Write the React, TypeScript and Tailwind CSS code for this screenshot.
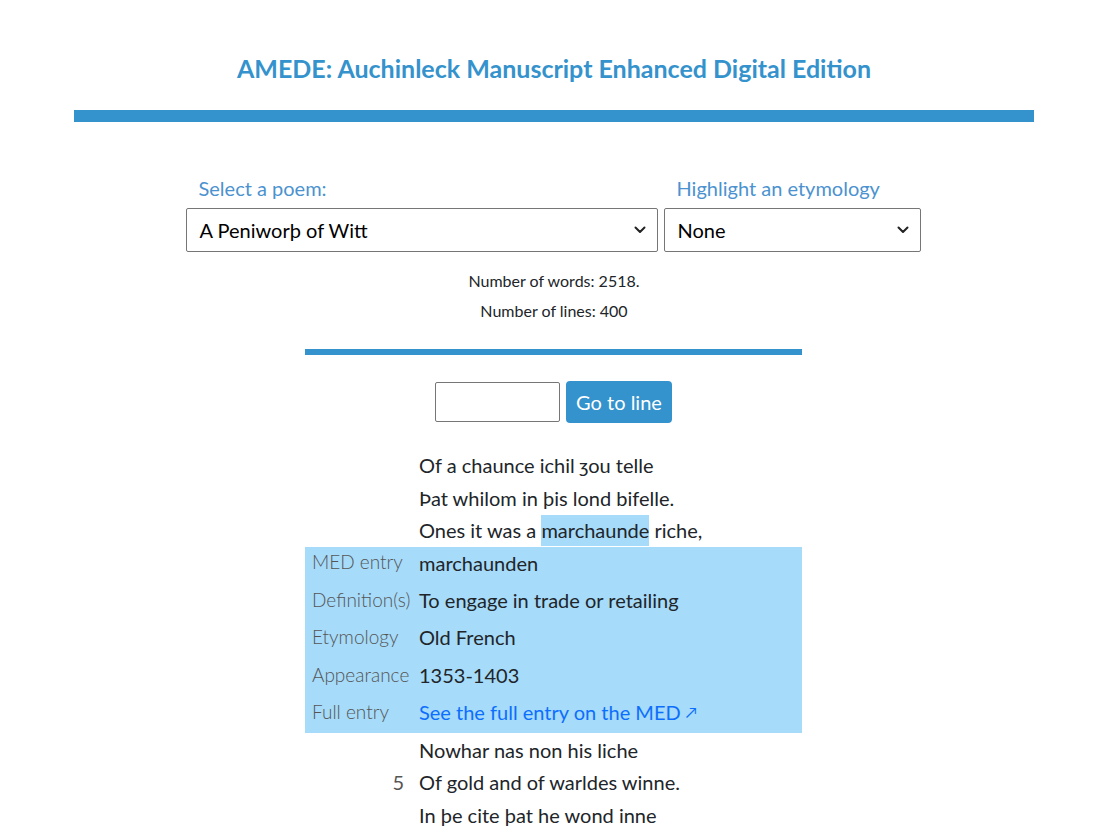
import React from "react";

const font = { fontFamily: "Lato, 'Noto Sans', sans-serif" };

function Chevron() {
  return (
    <svg width="12" height="8" viewBox="0 0 12 8" className="pointer-events-none absolute right-[12px] top-1/2 -translate-y-1/2">
      <path d="M1.5 1.5 L6 6 L10.5 1.5" fill="none" stroke="#222" strokeWidth="2" strokeLinecap="round" strokeLinejoin="round" />
    </svg>
  );
}

const poemBefore = [
  { n: "", t: "Of a chaunce ichil ȝou telle" },
  { n: "", t: "Þat whilom in þis lond bifelle." },
];
const poemAfter = [
  { n: "", t: "Nowhar nas non his liche" },
  { n: "5", t: "Of gold and of warldes winne." },
  { n: "", t: "In þe cite þat he wond inne" },
];

function Line({ n, children }: { n: string; children: React.ReactNode }) {
  return (
    <div className="grid grid-cols-[114px_1fr] h-[32.5px] items-center">
      <div className="text-right pr-[15px] text-[20px] text-[#555]">{n}</div>
      <div className="text-[20px] text-[#212529] whitespace-nowrap">{children}</div>
    </div>
  );
}

const rows: [string, React.ReactNode][] = [
  ["MED entry", "marchaunden"],
  ["Definition(s)", "To engage in trade or retailing"],
  ["Etymology", "Old French"],
  ["Appearance", "1353-1403"],
  [
    "Full entry",
    <span className="text-[#0d6efd]">
      See the full entry on the MED <span className="text-[15px] relative top-[-2px]">↗</span>
    </span>,
  ],
];

export default function App() {
  return (
    <div className="w-full min-h-[836px] bg-white overflow-hidden pr-[7px]" style={font}>
      <div className="w-[960px] mx-auto pt-[52px]">
        <h1 className="text-center text-[25px] leading-[32px] font-bold text-[#3492cc]">
          AMEDE: Auchinleck Manuscript Enhanced Digital Edition
        </h1>
        <div className="mt-[26px] h-[12px] bg-[#3492cc]" />

        <div className="flex justify-center gap-[6px] mt-[54px] ml-[-2px]">
          <div className="flex flex-col w-[472px]">
            <label className="pl-[13px] text-[20px] leading-[24px] text-[#4b92cf]">Select a poem:</label>
            <div className="relative mt-[8px]">
              <div className="h-[44px] border border-[#767676] rounded-[2px] flex items-center pl-[13px] text-[20px] text-black">
                A Peniworþ of Witt
              </div>
              <Chevron />
            </div>
          </div>
          <div className="flex flex-col w-[257px]">
            <label className="pl-[13px] text-[20px] leading-[24px] text-[#4b92cf] whitespace-nowrap">Highlight an etymology</label>
            <div className="relative mt-[8px]">
              <div className="h-[44px] border border-[#767676] rounded-[2px] flex items-center pl-[13px] text-[20px] text-black">
                None
              </div>
              <Chevron />
            </div>
          </div>
        </div>

        <div className="mt-[14px] text-center text-[16px] leading-[30px] text-[#212529]">
          <p>Number of words: 2518.</p>
          <p>Number of lines: 400</p>
        </div>

        <div className="w-[497px] mx-auto ml-[231px]">
          <div className="mt-[23px] h-[6px] bg-[#3492cc]" />
          <div className="flex justify-center gap-[6px] mt-[26px] items-center">
            <div className="w-[125px] h-[40px] border border-[#767676] rounded-[2px]" />
            <button className="w-[106px] h-[42px] rounded-[4px] bg-[#3492cc] text-white text-[20px]">
              Go to line
            </button>
          </div>

          <div className="mt-[26px]">
            {poemBefore.map((l, i) => (
              <Line key={i} n={l.n}>{l.t}</Line>
            ))}
            <Line n="">
              Ones it was a{" "}
              <span className="bg-[#a6dbfa] inline-block leading-[31px]">marchaunde</span> riche,
            </Line>
            <div className="bg-[#a6dbfa]">
              {rows.map(([k, v], i) => (
                <div key={i} className="grid grid-cols-[114px_1fr] h-[37.4px] items-center pb-[5px]">
                  <div className="pl-[7px] text-[19px] text-[#555] font-light whitespace-nowrap">{k}</div>
                  <div className="text-[20px] text-[#212529] whitespace-nowrap">{v}</div>
                </div>
              ))}
            </div>
            {poemAfter.map((l, i) => (
              <Line key={i} n={l.n}>{l.t}</Line>
            ))}
          </div>
        </div>
      </div>
    </div>
  );
}
